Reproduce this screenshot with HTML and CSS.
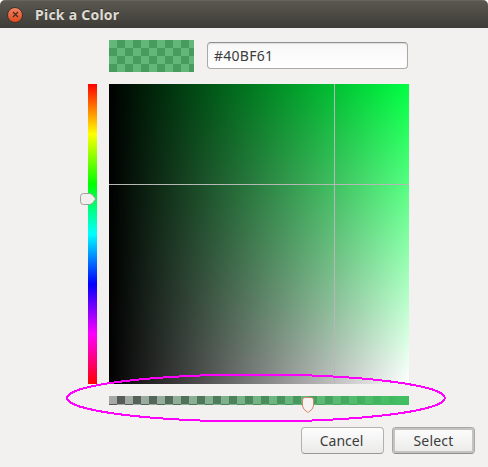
FILE: index.html
```html
<!DOCTYPE html>
<html lang="en">
<head>
<meta charset="utf-8">
<title>Pick a Color</title>
<link rel="stylesheet" href="styles.css">
</head>
<body>
<div class="dialog">
  <header class="titlebar">
    <button class="close" aria-label="Close">
      <svg width="7" height="7" viewBox="0 0 7 7"><path d="M1 1l5 5M6 1l-5 5" stroke="#4a2a1c" stroke-width="1.2" fill="none"/></svg>
    </button>
    <h1 class="title">Pick a Color</h1>
  </header>
  <main class="editor">
    <div class="top-row">
      <div class="swatch checker"></div>
      <div class="entry">#40BF61</div>
    </div>
    <div class="hue">
      <svg class="hue-thumb" width="16" height="12" viewBox="0 0 16 12"><path d="M3.5.5h6Q12 .8 13.5 3L15.3 5.5v1L13.5 9Q12 11.2 9.5 11.5h-6Q.5 11.5.5 8.5v-5Q.5.5 3.5.5z" fill="#f0efee" stroke="#a09f9d"/></svg>
    </div>
    <div class="plane">
      <div class="line-h"></div>
      <div class="line-v"></div>
    </div>
    <div class="alpha checker">
      <svg class="alpha-thumb" width="12" height="17" viewBox="0 0 12 17"><path d="M3 1.5h6Q11.5 1.5 11.5 4v6Q11 13.5 6.5 16.2h-1Q1 13.5.5 10V4Q.5 1.5 3 1.5z" fill="#f5f4f3" stroke="#d38367"/></svg>
    </div>
  </main>
  <footer class="actions">
    <button class="btn">Cancel</button>
    <button class="btn default">Select</button>
  </footer>
  <svg class="highlight" width="382" height="50" viewBox="0 0 382 50"><ellipse cx="191" cy="25" rx="189" ry="23.5" fill="none" stroke="#f0f" stroke-width="2" shape-rendering="crispEdges"/></svg>
</div>
</body>
</html>
```
FILE: styles.css
```css
* { box-sizing: border-box; }
body { margin: 0; background: #fff; font-family: "Noto Sans", "Open Sans", sans-serif; color: #3c3c3c; }
.dialog {
  position: relative; width: 488px; height: 467px; overflow: hidden; background: #f2f1f0;
  border-top-left-radius: 5px; border-top-right-radius: 5px;
}
.titlebar {
  display: flex; align-items: center; gap: 12px; height: 28px; padding: 0 7px;
  border-top: 1px solid #66645c;
  background: linear-gradient(#5a5850, #3d3c38);
}
.close {
  display: flex; align-items: center; justify-content: center;
  width: 16px; height: 16px; padding: 0; border: 1px solid #46322a; border-radius: 50%;
  background: linear-gradient(#f28363, #df4c1c);
}
.title {
  margin: 0; padding-top: 1px; font-size: 14px; line-height: 20px; font-weight: 700;
  color: #dfdbd2; text-shadow: 0 -1px #33322e; white-space: nowrap; letter-spacing: 0.25px;
}
.editor {
  display: grid; grid-template-columns: 9px 300px; grid-template-rows: 32px 300px 9px;
  column-gap: 12px; row-gap: 12px; padding: 12px 0 0 88px;
}
.top-row { grid-column: 2; display: flex; align-items: center; gap: 13px; width: 300px; }
.checker {
  --tiles: conic-gradient(#575757 25%, #a8a8a8 0 50%, #575757 0 75%, #a8a8a8 0);
}
.swatch {
  width: 85px; height: 32px; flex: none;
  background: linear-gradient(rgba(64, 191, 97, .66), rgba(64, 191, 97, .66)), var(--tiles) 0 0 / 16px 16px;
}
.entry {
  flex: none; width: 201px; height: 27px; margin-top: -1px; padding: 0 6px;
  border: 1px solid #aaa9a8; border-top-color: #8f8f8f; border-radius: 4px;
  background: linear-gradient(#f7f7f7, #fff); box-shadow: inset 0 1px 1px #ddd;
  font-size: 14px; line-height: 26px; letter-spacing: 0.25px;
}
.hue {
  grid-column: 1; position: relative;
  background: linear-gradient(#f00, #ff0, #0f0, #0ff, #00f, #f0f, #f00);
}
.hue-thumb { position: absolute; left: -8px; top: 109px; }
.plane {
  position: relative;
  background: linear-gradient(90deg, #000, transparent), linear-gradient(#00ff42, #fff);
}
.line-h, .line-v { position: absolute; background: #b5b8b5; }
.line-h { left: 0; right: 0; top: 100px; height: 1px; }
.line-v { top: 0; bottom: 0; left: 225px; width: 1px; }
.alpha {
  grid-column: 2; position: relative;
  background: linear-gradient(90deg, rgba(64, 191, 97, 0), #40bf61), var(--tiles) 0 0 / 16px 16px;
}
.alpha-thumb { position: absolute; left: 193px; top: 0; }
.actions { display: flex; justify-content: flex-end; gap: 8px; padding: 22px 13px 0 0; }
.btn {
  width: 83px; height: 27px; padding: 0 2px 0 0; border: 1px solid #b3b1af; border-bottom-color: #989796; border-radius: 4px;
  background: linear-gradient(#fdfdfd, #ebeae9);
  font: 14px/24px "Noto Sans", "Open Sans", sans-serif; color: #3c3c3c;
}
.default { padding-right: 0; border-color: #aaa8a6; border-bottom-color: #8f8e8d; box-shadow: inset 0 0 0 2px #c4c3c1; letter-spacing: 0.2px; }
.highlight { position: absolute; left: 65px; top: 373px; }
```
